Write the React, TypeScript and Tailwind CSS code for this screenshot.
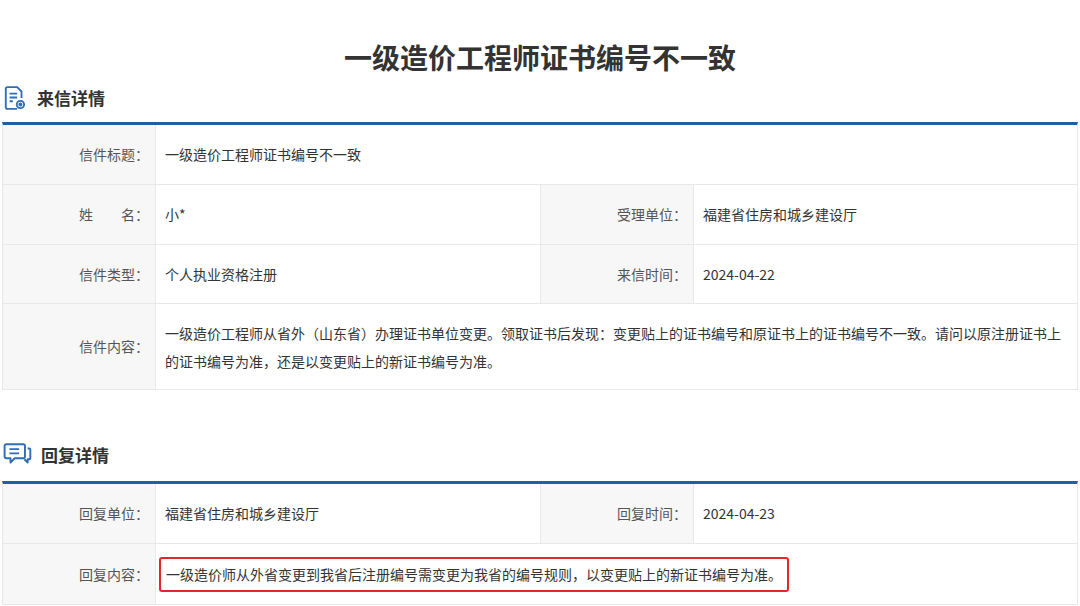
import React from "react";

const F = { fontFamily: '"Microsoft YaHei","Noto Sans CJK SC",sans-serif' };

function DocIcon() {
  return (
    <svg width="24" height="26" viewBox="0 0 22 24" fill="none" stroke="#2f6db5" strokeWidth="1.7">
      <path d="M13 22H4a1.5 1.5 0 0 1-1.5-1.5v-17A1.5 1.5 0 0 1 4 2h9l4 4v6" />
      <path d="M6 8h7M6 11.5h7M6 15h3" />
      <circle cx="16" cy="18" r="3.4" />
      <circle cx="16" cy="18" r="1" fill="#2f6db5" />
    </svg>
  );
}
function ChatIcon() {
  return (
    <svg width="30" height="28" viewBox="0 0 28 26" fill="none" stroke="#2f6db5" strokeWidth="1.8" strokeLinejoin="round">
      <path d="M3 3h16a1.5 1.5 0 0 1 1.5 1.5v10A1.5 1.5 0 0 1 19 16h-8l-4 4v-4H3a1.5 1.5 0 0 1-1.5-1.5v-10A1.5 1.5 0 0 1 3 3z" />
      <path d="M6 7.5h9M6 11.5h9" />
      <path d="M23 7h1.5a1 1 0 0 1 1 1v8a1 1 0 0 1-1 1H23v3l-3-3" />
    </svg>
  );
}

const L = "bg-[#f7f7f7] text-right pr-[6px] text-[#555] border-r border-[#e8e8e8]";
const V = "pl-[9px] pr-3 text-[#333]";
const T = "mx-[2px] border-t-[3px] border-t-[#1f5ea8] border-x border-x-[#e8e8e8]";

export default function App() {
  return (
    <div style={F} className="w-[1080px] h-[606px] bg-white overflow-hidden text-[14px]">
      <h1 className="text-center text-[28px] font-bold text-[#333] pt-[36px] leading-[42px]">一级造价工程师证书编号不一致</h1>
      <div className="flex items-center gap-[10px] pl-[3px] h-[40px]">
        <DocIcon />
        <span className="text-[17px] font-bold text-[#333]">来信详情</span>
      </div>
      <div className={T + " mt-[4px]"}>
        <div className="grid grid-cols-[153px_385px_153px_1fr] border-b border-[#e8e8e8] h-[60px]">
          <div className={L + " flex items-center justify-end"}>信件标题：</div>
          <div className={V + " col-span-3 flex items-center"}>一级造价工程师证书编号不一致</div>
        </div>
        <div className="grid grid-cols-[153px_385px_153px_1fr] border-b border-[#e8e8e8] h-[60px]">
          <div className={L + " flex items-center justify-end"}>姓&emsp;&emsp;名：</div>
          <div className={V + " flex items-center border-r border-[#e8e8e8]"}>小*</div>
          <div className={L + " flex items-center justify-end"}>受理单位：</div>
          <div className={V + " flex items-center"}>福建省住房和城乡建设厅</div>
        </div>
        <div className="grid grid-cols-[153px_385px_153px_1fr] border-b border-[#e8e8e8] h-[59px]">
          <div className={L + " flex items-center justify-end"}>信件类型：</div>
          <div className={V + " flex items-center border-r border-[#e8e8e8]"}>个人执业资格注册</div>
          <div className={L + " flex items-center justify-end"}>来信时间：</div>
          <div className={V + " flex items-center"}>2024-04-22</div>
        </div>
        <div className="grid grid-cols-[153px_1fr] border-b border-[#e8e8e8] h-[86px]">
          <div className={L + " flex items-center justify-end"}>信件内容：</div>
          <div className={V + " flex items-center leading-[28px] pr-[10px]"}>一级造价工程师从省外（山东省）办理证书单位变更。领取证书后发现：变更贴上的证书编号和原证书上的证书编号不一致。请问以原注册证书上的证书编号为准，还是以变更贴上的新证书编号为准。</div>
        </div>
      </div>
      <div className="flex items-center gap-[8px] pl-[3px] h-[40px] mt-[45px]">
        <ChatIcon />
        <span className="text-[17px] font-bold text-[#333]">回复详情</span>
      </div>
      <div className={T + " mt-[6px]"}>
        <div className="grid grid-cols-[153px_385px_153px_1fr] border-b border-[#e8e8e8] h-[60px]">
          <div className={L + " flex items-center justify-end"}>回复单位：</div>
          <div className={V + " flex items-center border-r border-[#e8e8e8]"}>福建省住房和城乡建设厅</div>
          <div className={L + " flex items-center justify-end"}>回复时间：</div>
          <div className={V + " flex items-center"}>2024-04-23</div>
        </div>
        <div className="grid grid-cols-[153px_1fr] border-b border-[#e8e8e8] h-[61px]">
          <div className={L + " flex items-center justify-end"}>回复内容：</div>
          <div className="flex items-center pl-[3px]">
            <span className="border-2 border-[#e8262a] rounded-[3px] px-[5px] py-[5px] text-[#333]">一级造价师从外省变更到我省后注册编号需变更为我省的编号规则，以变更贴上的新证书编号为准。</span>
          </div>
        </div>
      </div>
    </div>
  );
}
